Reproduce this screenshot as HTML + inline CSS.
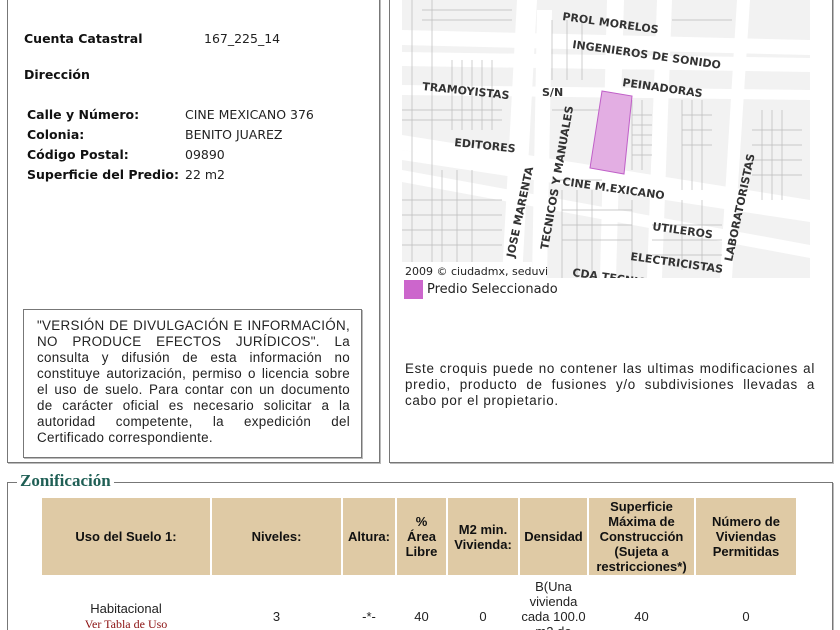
<!DOCTYPE html>
<html><head><meta charset="utf-8"><style>
html,body{margin:0;width:840px;height:630px;overflow:hidden}
body{background:#fff;position:relative;font-family:"DejaVu Sans","Liberation Sans",sans-serif;font-size:12px;color:#222}
.a{position:absolute}
.box{position:absolute;border:1px solid #777;box-shadow:1px 1px 0 #bbb}
.lbl{position:absolute;font-weight:bold;font-size:12.5px;color:#111}
.val{position:absolute;font-size:12.5px}
table{border-collapse:separate;border-spacing:2px;position:absolute;left:40px;top:496px;font-family:"Liberation Sans",sans-serif;font-size:13px}
th{background:#dfcaa5;font-weight:bold;color:#111;height:77px;padding:0;text-align:center;line-height:15px}
td{text-align:center;padding:0;height:78px;font-size:13px;line-height:15px;vertical-align:middle}
.p{font-family:"Liberation Sans",sans-serif;font-size:13.4px;line-height:16px;text-align:justify;letter-spacing:0.3px}
</style></head><body>
<div class="box" style="left:7px;top:-3px;width:371px;height:464px"></div>
<div class="box" style="left:389px;top:-3px;width:442px;height:464px"></div>
<div class="lbl" style="left:24px;top:31px">Cuenta Catastral</div>
<div class="val" style="left:204px;top:31px">167_225_14</div>
<div class="lbl" style="left:24px;top:67px">Dirección</div>
<div class="lbl" style="left:27px;top:105px;line-height:20px">Calle y Número:<br>Colonia:<br>Código Postal:<br>Superficie del Predio:</div>
<div class="val" style="left:185px;top:105px;line-height:20px">CINE MEXICANO 376<br>BENITO JUAREZ<br>09890<br>22 m2</div>
<div class="box" style="left:23px;top:309px;width:337px;height:147px"></div>
<div class="a p" style="left:37px;top:318px;width:313px">"VERSIÓN DE DIVULGACIÓN E INFORMACIÓN, NO PRODUCE EFECTOS JURÍDICOS". La consulta y difusión de esta información no constituye autorización, permiso o licencia sobre el uso de suelo. Para contar con un documento de carácter oficial es necesario solicitar a la autoridad competente, la expedición del Certificado correspondiente.</div>
<svg class="a" style="left:402px;top:0" width="408" height="278" viewBox="0 0 408 278">
<rect width="408" height="278" fill="#f2f2f2"/>
<g fill="#fff">
<polygon points="0,30 408,40 408,55 0,45"/>
<polygon points="0,52 408,58 408,72 0,66"/>
<polygon points="0,85 408,90 408,100 0,95"/>
<polygon points="0,135 408,200 408,215 0,150"/>
<polygon points="0,150 408,210 408,222 0,160"/>
<polygon points="115,0 135,0 120,278 100,278"/>
<polygon points="135,10 150,10 145,278 130,278"/>
<polygon points="205,0 222,0 214,278 198,278"/>
<polygon points="255,0 270,0 260,278 245,278"/>
<polygon points="335,0 348,0 330,278 318,278"/>
<polygon points="0,170 408,245 408,258 0,182"/>
</g>
<g stroke="#bbb" stroke-width="0.7" fill="none">
<path d="M10,0V278M30,0V278M50,60V130M60,60V130M70,60V130M80,60V130M90,60V130M40,170V278M55,170V278M70,170V278M150,20V80M165,20V80M180,20V80M230,100V170M240,100V170M280,100V190M290,100V190M300,100V190M360,110V200M370,110V200M380,110V200M160,190V278M175,190V278M190,190V278M230,200V278M280,200V270M300,200V270"/>
<path d="M0,110H100M0,120H100M0,200H100M0,215H100M0,230H100M0,245H100M150,110H200M150,180H200M230,115H250M230,125H250M230,135H250M230,145H250M230,155H250M280,115H310M280,130H310M280,145H310M350,130H400M350,145H400M350,160H400M350,175H400M160,210H230M160,225H230M160,240H230M250,225H320M250,240H320M250,255H320M20,10H110M20,20H110M270,20H330"/>
</g>
<polygon points="200,91 230,96 222,174 188,168" fill="#e3aee3" stroke="#c060c8" stroke-width="1"/>
<g font-family="DejaVu Sans,sans-serif" font-size="11" font-weight="bold" fill="#333">
<text x="160" y="20" transform="rotate(8 160 20)">PROL MORELOS</text>
<text x="170" y="48" transform="rotate(8 170 48)">INGENIEROS DE SONIDO</text>
<text x="220" y="86" transform="rotate(8 220 86)">PEINADORAS</text>
<text x="20" y="90" transform="rotate(6 20 90)">TRAMOYISTAS</text>
<text x="140" y="96">S/N</text>
<text x="52" y="146" transform="rotate(6 52 146)">EDITORES</text>
<text x="160" y="185" transform="rotate(8 160 185)">CINE M.EXICANO</text>
<text x="250" y="230" transform="rotate(8 250 230)">UTILEROS</text>
<text x="228" y="260" transform="rotate(8 228 260)">ELECTRICISTAS</text>
<text x="170" y="276" transform="rotate(8 170 276)">CDA TECNICOS</text>
<text x="146" y="250" transform="rotate(-80 146 250)">TECNICOS Y MANUALES</text>
<text x="112" y="258" transform="rotate(-78 112 258)">JOSE MARENTA</text>
<text x="330" y="262" transform="rotate(-78 330 262)">LABORATORISTAS</text>
</g>
<rect x="0" y="262" width="130" height="16" fill="#fff"/>
<text x="3" y="275" font-family="DejaVu Sans,sans-serif" font-size="11" fill="#222">2009 © ciudadmx, seduvi</text>
</svg>
<div class="a" style="left:404px;top:280px;width:19px;height:19px;background:#cc66cc"></div>
<div class="a" style="left:427px;top:282px;font-size:13px">Predio Seleccionado</div>
<div class="a p" style="left:405px;top:361px;width:410px;letter-spacing:0.7px">Este croquis puede no contener las ultimas modificaciones al predio, producto de fusiones y/o subdivisiones llevadas a cabo por el propietario.</div>
<div class="a" style="left:7px;top:482px;width:824px;height:160px;border:1px solid #777;box-shadow:1px 1px 0 #bbb"></div>
<div class="a" style="left:17px;top:471px;background:#fff;padding:0 3px;font-family:'Liberation Serif',serif;font-weight:bold;font-size:17px;color:#1f5f55">Zonificación</div>
<table>
<tr><th style="width:168px">Uso del Suelo 1:</th><th style="width:129px">Niveles:</th><th style="width:52px">Altura:</th><th style="width:49px">%<br>Área<br>Libre</th><th style="width:70px">M2 min.<br>Vivienda:</th><th style="width:67px">Densidad</th><th style="width:105px">Superficie<br>Máxima de<br>Construcción<br>(Sujeta a<br>restricciones*)</th><th style="width:100px">Número de<br>Viviendas<br>Permitidas</th></tr>
<tr><td>Habitacional<br><span style="color:#8b1010;font-family:'Liberation Serif',serif;font-size:12px">Ver Tabla de Uso</span></td><td>3</td><td>-*-</td><td>40</td><td>0</td><td>B(Una<br>vivienda<br>cada 100.0<br>m2 de<br>terreno)</td><td>40</td><td>0</td></tr>
</table>
</body></html>
